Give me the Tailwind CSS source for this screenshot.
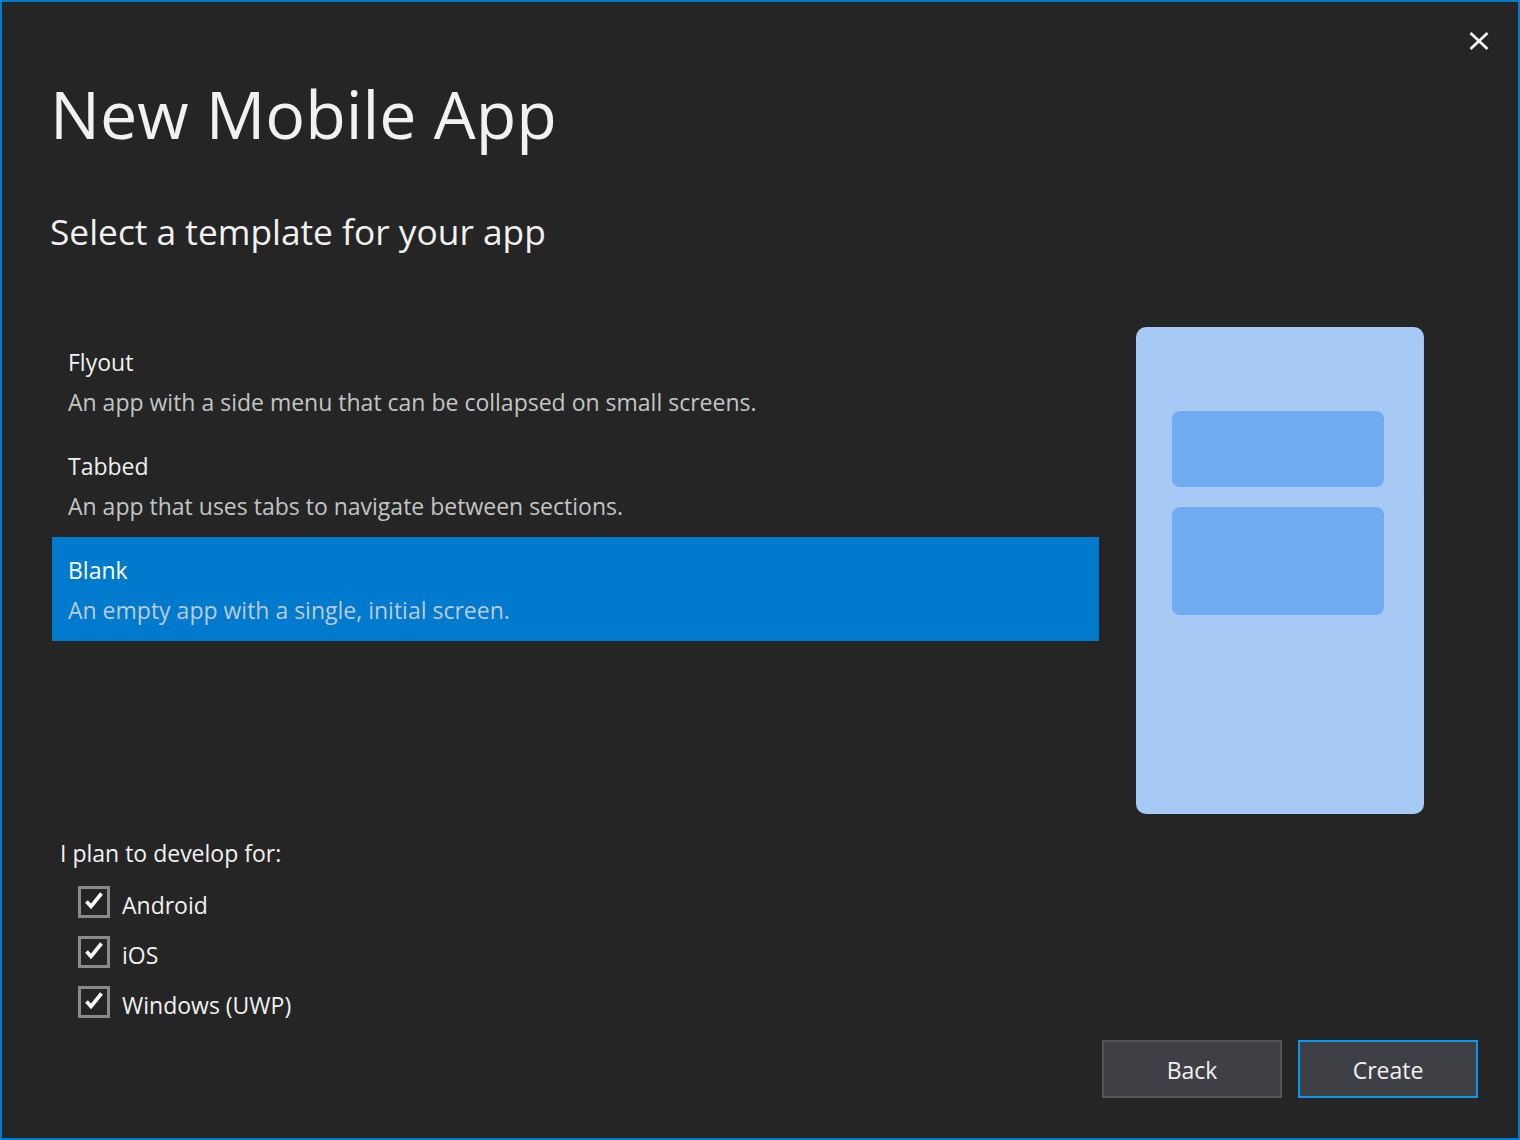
<!DOCTYPE html>
<html lang="en">
<head>
    <meta charset="UTF-8">
    <title>New Mobile App</title>
    <script src="https://cdn.jsdelivr.net/npm/@tailwindcss/browser@4"></script>
</head>
<body class="bg-[#252526]">
    <div class="relative w-[1520px] h-[1140px] bg-[#252526] border-2 border-[#007acc] font-['Open_Sans','Noto_Sans',sans-serif] text-[#f1f1f1] overflow-hidden">
        <!-- close -->
        <svg class="absolute left-[1467px] top-[29px]" width="20" height="20" viewBox="0 0 20 20" fill="none" stroke="#f1f1f1" stroke-width="2.8"><path d="M1.5 2 18.5 18M18.5 2 1.5 18"/></svg>

        <h1 class="pl-[48px] pt-[69px] pb-[3px] text-[66.3px] leading-[84px] font-normal">New Mobile App</h1>
        <h2 class="pl-[48px] pt-[49px] text-[35.3px] leading-[48px] font-normal">Select a template for your app</h2>

        <div class="flex pl-[50px] pt-[72px]">
            <!-- templates -->
            <div class="w-[1047px] pt-[2px]">
                <div class="h-[104px] px-4 pt-[13px]">
                    <div class="text-[23px] leading-[40px]">Flyout</div>
                    <div class="text-[23px] leading-[40px] text-[#c4c4c4]">An app with a side menu that can be collapsed on small screens.</div>
                </div>
                <div class="h-[104px] px-4 pt-[13px]">
                    <div class="text-[23px] leading-[40px]">Tabbed</div>
                    <div class="text-[23px] leading-[40px] text-[#c4c4c4]">An app that uses tabs to navigate between sections.</div>
                </div>
                <div class="h-[104px] px-4 pt-[13px] bg-[#007acc]">
                    <div class="text-[23px] leading-[40px] text-white">Blank</div>
                    <div class="text-[23px] leading-[40px] text-[#bccbdb]">An empty app with a single, initial screen.</div>
                </div>
            </div>
            <!-- preview -->
            <div class="relative ml-[37px] w-[288px] h-[487px] rounded-[10px] bg-[#a6c9f6] pt-[84px] pl-[36px]">
                <div class="absolute right-0 top-[10px] w-px h-[156px] bg-[#9dbfec]"></div>
                <div class="w-[212px] h-[76px] rounded-lg bg-[#70abf0]"></div>
                <div class="w-[212px] h-[108px] rounded-lg bg-[#70abf0] mt-[20px]"></div>
            </div>
        </div>

        <div class="pl-[58px] pt-[19px] text-[23px] leading-[40px]">I plan to develop for:</div>
        <div class="pl-[76px] pt-[12px] flex flex-col gap-[10px]">
            <label class="flex items-start gap-3 h-[40px] text-[23px] leading-[40px]">
                <span class="mt-px w-[32px] h-[32px] border-[3px] border-[#8a8a8a] flex items-center justify-center"><svg width="22" height="22" viewBox="0 0 22 22" fill="none" stroke="#fff" stroke-width="3.6"><path d="M3.5 10.5 8 15.5 18.5 2.5"/></svg></span>
                Android
            </label>
            <label class="flex items-start gap-3 h-[40px] text-[23px] leading-[40px]">
                <span class="mt-px w-[32px] h-[32px] border-[3px] border-[#8a8a8a] flex items-center justify-center"><svg width="22" height="22" viewBox="0 0 22 22" fill="none" stroke="#fff" stroke-width="3.6"><path d="M3.5 10.5 8 15.5 18.5 2.5"/></svg></span>
                iOS
            </label>
            <label class="flex items-start gap-3 h-[40px] text-[23px] leading-[40px]">
                <span class="mt-px w-[32px] h-[32px] border-[3px] border-[#8a8a8a] flex items-center justify-center"><svg width="22" height="22" viewBox="0 0 22 22" fill="none" stroke="#fff" stroke-width="3.6"><path d="M3.5 10.5 8 15.5 18.5 2.5"/></svg></span>
                Windows (UWP)
            </label>
        </div>

        <div class="absolute left-[1100px] top-[1038px] flex gap-4">
            <button class="w-[180px] h-[58px] pt-[2px] bg-[#3f3f46] border-2 border-[#555555] text-[23px]">Back</button>
            <button class="w-[180px] h-[58px] pt-[2px] bg-[#3f3f46] border-2 border-[#0e97f0] text-[23px]">Create</button>
        </div>
    </div>
</body>
</html>
